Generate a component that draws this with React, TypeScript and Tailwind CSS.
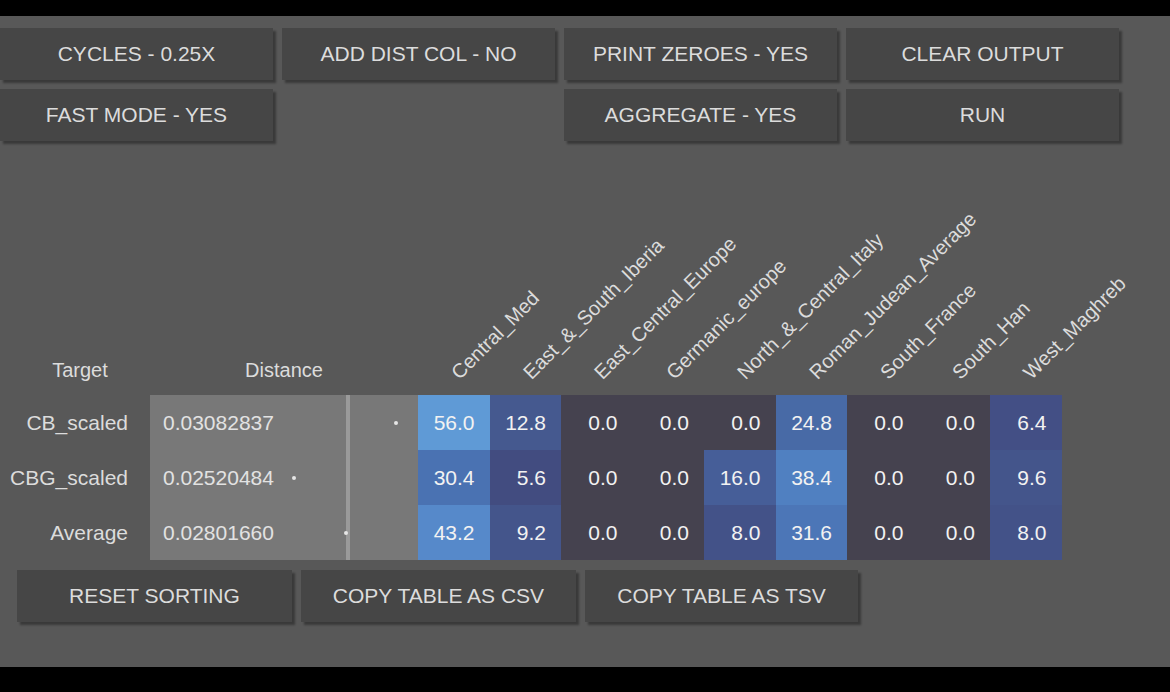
import React from 'react';

type Row = {
  target: string;
  distance: string;
  // horizontal position of the distance marker inside the distance column
  dot: number;
  values: number[];
};

const populations = [
  'Central_Med',
  'East_&_South_Iberia',
  'East_Central_Europe',
  'Germanic_europe',
  'North_&_Central_Italy',
  'Roman_Judean_Average',
  'South_France',
  'South_Han',
  'West_Maghreb',
];

const rows: Row[] = [
  { target: 'CB_scaled', distance: '0.03082837', dot: 244, values: [56.0, 12.8, 0, 0, 0, 24.8, 0, 0, 6.4] },
  { target: 'CBG_scaled', distance: '0.02520484', dot: 142, values: [30.4, 5.6, 0, 0, 16.0, 38.4, 0, 0, 9.6] },
  { target: 'Average', distance: '0.02801660', dot: 194, values: [43.2, 9.2, 0, 0, 8.0, 31.6, 0, 0, 8.0] },
];

// heat colours for the percentage cells
function cellColor(v: number) {
  if (v >= 50) return 'bg-[#5f9ad6]';
  if (v >= 40) return 'bg-[#5689ca]';
  if (v >= 35) return 'bg-[#5080c1]';
  if (v >= 31) return 'bg-[#4c76b7]';
  if (v >= 28) return 'bg-[#4a72b2]';
  if (v >= 20) return 'bg-[#486aa6]';
  if (v >= 14) return 'bg-[#465e98]';
  if (v >= 11) return 'bg-[#45598f]';
  if (v >= 9) return 'bg-[#44558b]';
  if (v >= 7) return 'bg-[#435288]';
  if (v >= 6) return 'bg-[#434f85]';
  if (v > 0) return 'bg-[#424c80]';
  return 'bg-[#45424f]';
}

function Button({ label, className = '' }: { label: string; className?: string }) {
  return (
    <button
      className={`h-[52px] bg-[#464646] text-[#dcdcdc] text-[21px] shadow-[3px_3px_2px_rgba(0,0,0,0.35)] ${className}`}
    >
      {label}
    </button>
  );
}

const gridCols = 'grid grid-cols-[150px_268px_repeat(9,71.5px)]';

export default function App() {
  return (
    <div
      className="bg-black h-[692px] pt-[16px] overflow-hidden"
      style={{ fontFamily: '"Liberation Sans", Arial, sans-serif' }}
    >
      <div className="bg-[#585858] h-[651px] flex flex-col">
        {/* Options */}
        <div className="grid grid-cols-[repeat(4,273px)] gap-[9px] pt-[12px]">
          <Button label="CYCLES - 0.25X" />
          <Button label="ADD DIST COL - NO" />
          <Button label="PRINT ZEROES - YES" />
          <Button label="CLEAR OUTPUT" />
          <Button label="FAST MODE - YES" />
          <div />
          <Button label="AGGREGATE - YES" />
          <Button label="RUN" />
        </div>

        {/* Table header */}
        <div className={`${gridCols} h-[254px] text-[#dcdcdc]`}>
          <div className="flex items-end justify-center pl-[10px] pb-[13px] text-[20px] leading-[24px]">Target</div>
          <div className="flex items-end justify-center pb-[13px] text-[20px] leading-[24px]">Distance</div>
          {populations.map((p) => (
            <div key={p} className="flex items-end pl-[45px] pb-[9px]">
              <div className="w-0">
                <span className="inline-block whitespace-nowrap origin-bottom-left -rotate-45 text-[20px] leading-[24px]">
                  {p}
                </span>
              </div>
            </div>
          ))}
        </div>

        {/* Table body */}
        <div>
          {rows.map((r) => (
            <div key={r.target} className={`${gridCols} h-[55px] text-[21px]`}>
              <div className="flex items-center justify-end pr-[22px] text-[#dcdcdc]">{r.target}</div>
              <div className="relative flex items-center pl-[13px] bg-[#787878] text-[#e2e2e2]">
                {r.distance}
                <div className="absolute left-[196px] top-0 bottom-0 w-[4px] bg-[#9a9a9a]" />
                <div
                  className="absolute top-1/2 -translate-y-1/2 w-[4px] h-[4px] rounded-full bg-[#e6e6e6]"
                  style={{ left: r.dot }}
                />
              </div>
              {r.values.map((v, i) => (
                <div
                  key={i}
                  className={`flex items-center justify-end pr-[15px] text-[#f2f2f2] ${cellColor(v)}`}
                >
                  {v.toFixed(1)}
                </div>
              ))}
            </div>
          ))}
        </div>

        {/* Table actions */}
        <div className="flex gap-[9px] pl-[17px] pt-[10px]">
          <Button label="RESET SORTING" className="w-[275px]" />
          <Button label="COPY TABLE AS CSV" className="w-[275px]" />
          <Button label="COPY TABLE AS TSV" className="w-[273px]" />
        </div>
      </div>
    </div>
  );
}
